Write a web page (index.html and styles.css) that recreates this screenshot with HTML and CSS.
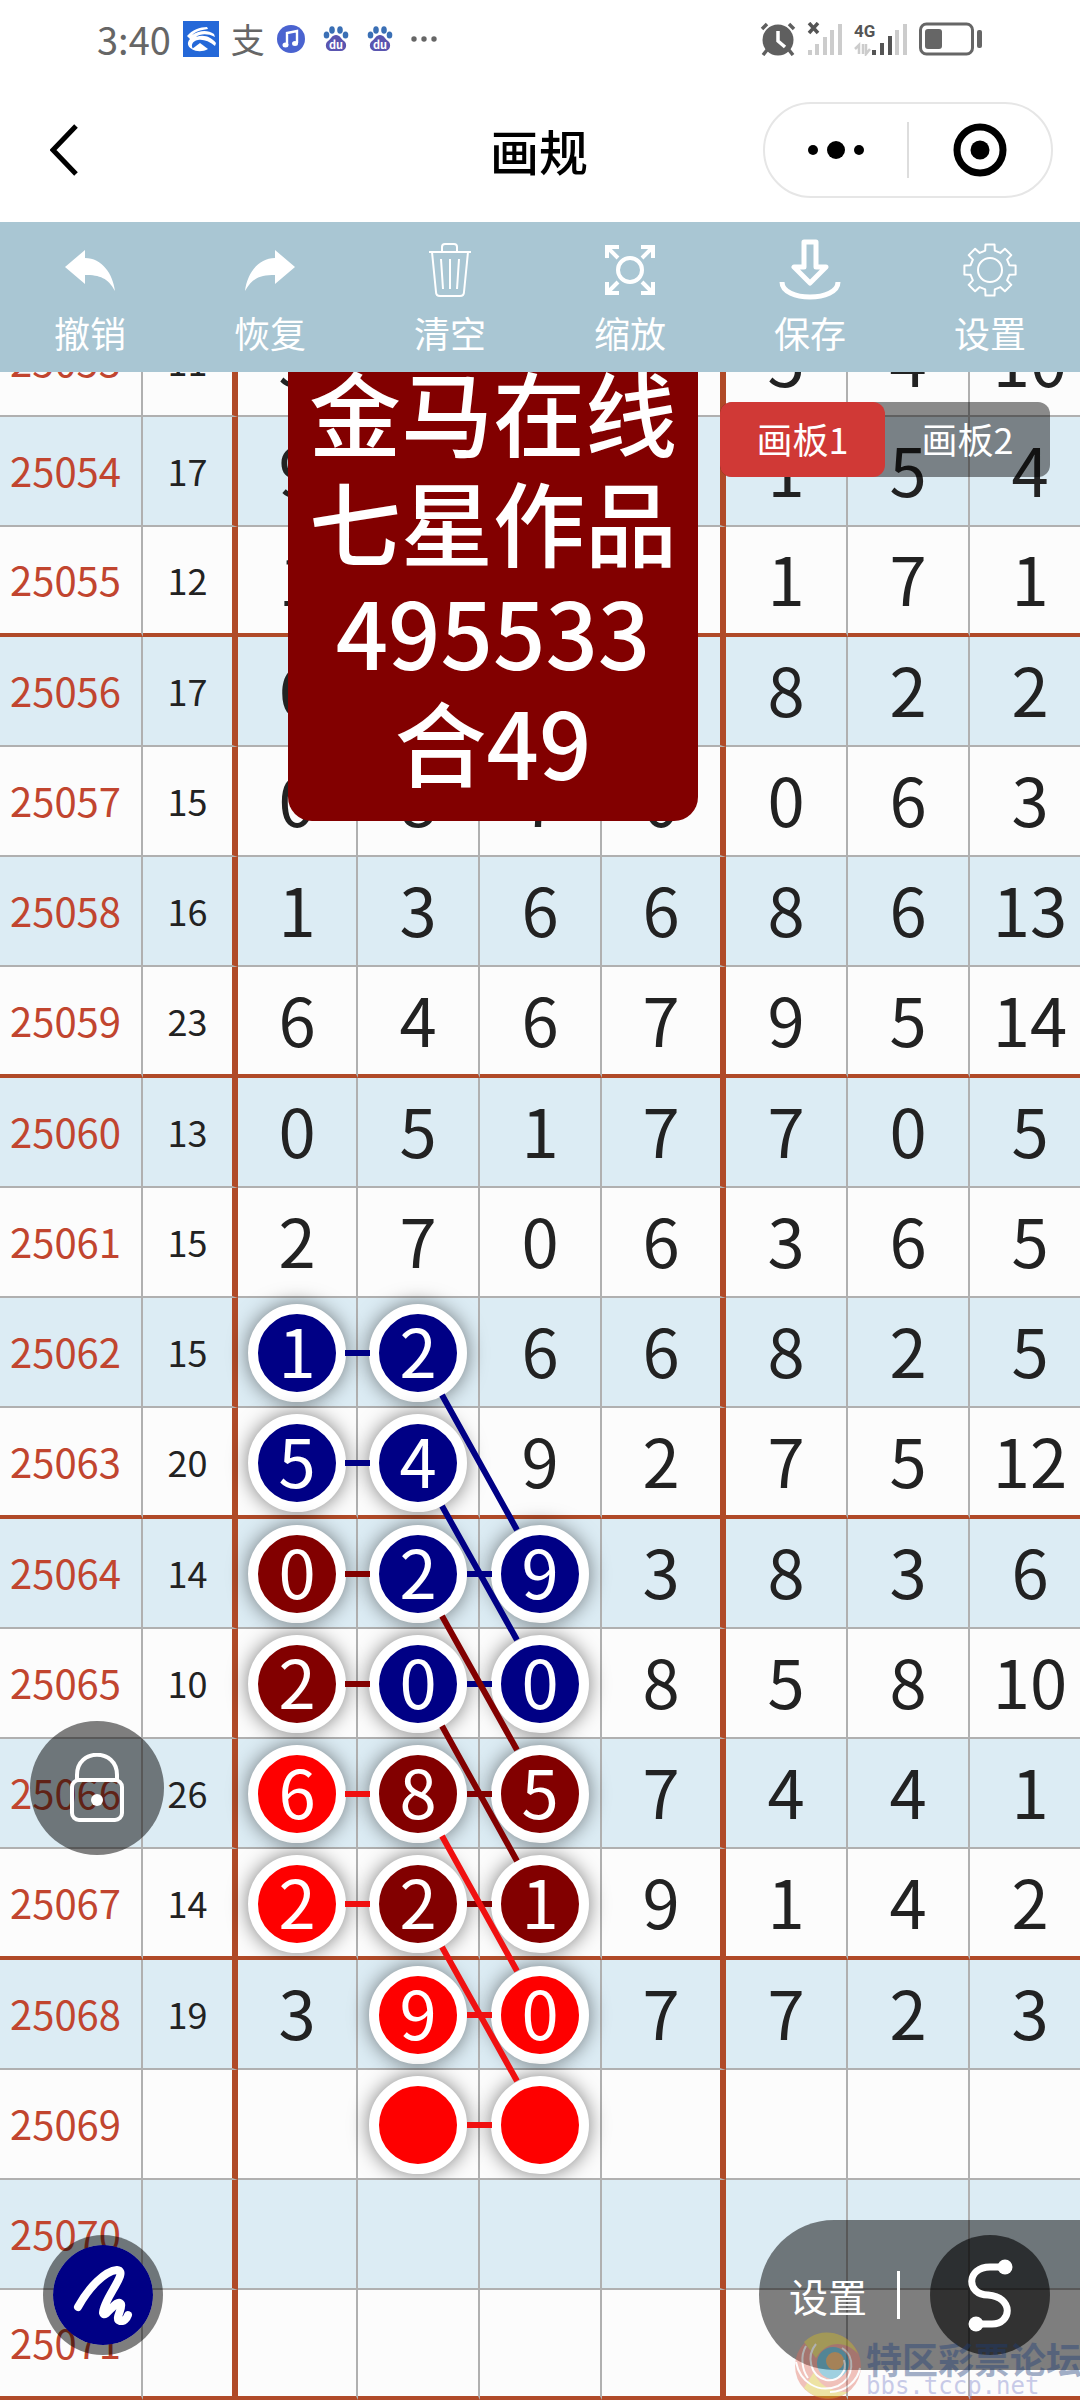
FILE: index.html
```html
<!DOCTYPE html>
<html lang="zh-CN">
<head>
  <meta charset="UTF-8" />
  <meta name="viewport" content="width=device-width, initial-scale=1.0" />
  <title>画规</title>
  <link rel="stylesheet" href="styles.css">
</head>
<body>
  <div class="app">
    <header class="status-bar">
      <div class="status-left">
        <span class="time">3:40</span>
        <svg width="36" height="36" viewBox="0 0 36 36">
          <rect width="36" height="36" fill="#2468d8"/>
          <path d="M4 15C9 9 17 6 24 6L25 8C17 9 12 11 9 14C17 9 25 9 31 13L32 16C24 12 17 13 13 16C21 13 28 16 33 22L32 25C26 20 20 18 15 19C9 20 7 25 11 29C5 27 3 22 7 18Z" fill="#fff"/>
          <path d="M9 28L17 22L25 28C20 31 13 31 9 28Z" fill="#fff"/>
        </svg>
        <span class="pay">支</span>
        <svg width="28" height="28" viewBox="0 0 28 28">
          <circle cx="14" cy="14" r="14" fill="#4a63d0"/>
          <path d="M10 20V8L20 6V18" fill="none" stroke="#fff" stroke-width="2.4"/>
          <ellipse cx="8.500" cy="20" rx="3" ry="2.500" fill="#fff"/>
          <ellipse cx="18" cy="18.500" rx="3" ry="2.500" fill="#fff"/>
        </svg>
        <svg class="paw" width="26" height="26" viewBox="0 0 26 26">
          <ellipse cx="3.500" cy="9" rx="2.800" ry="3.500"/><ellipse cx="9" cy="4" rx="2.800" ry="3.800"/>
          <ellipse cx="17" cy="4" rx="2.800" ry="3.800"/><ellipse cx="22.500" cy="9" rx="2.800" ry="3.500"/>
          <path d="M13 9C17 9 18 13 21 15C25 18 23 25 18 25H8C3 25 1 18 5 15C8 13 9 9 13 9Z" fill="#5a55b0"/>
          <text x="13" y="23">du</text>
        </svg>
        <svg class="paw" width="26" height="26" viewBox="0 0 26 26">
          <ellipse cx="3.500" cy="9" rx="2.800" ry="3.500"/><ellipse cx="9" cy="4" rx="2.800" ry="3.800"/>
          <ellipse cx="17" cy="4" rx="2.800" ry="3.800"/><ellipse cx="22.500" cy="9" rx="2.800" ry="3.500"/>
          <path d="M13 9C17 9 18 13 21 15C25 18 23 25 18 25H8C3 25 1 18 5 15C8 13 9 9 13 9Z" fill="#5a55b0"/>
          <text x="13" y="23">du</text>
        </svg>
        <svg class="more" width="26" height="6" viewBox="0 0 26 6" fill="#666">
          <circle cx="3" cy="3" r="2.700"/><circle cx="13" cy="3" r="2.700"/><circle cx="23" cy="3" r="2.700"/>
        </svg>
      </div>
      <div class="status-right">
        <svg width="36" height="34" viewBox="0 0 36 34">
          <circle cx="18" cy="18" r="15.500" fill="#5f5f5f"/>
          <path d="M2 7L7 2M34 7L29 2M7 28L3 33M29 28L33 33" stroke="#5f5f5f" stroke-width="3.500"/>
          <path d="M18 9V19L25 25" fill="none" stroke="#fff" stroke-width="3.500"/>
        </svg>
        <svg width="36" height="34" viewBox="0 0 36 34">
          <path d="M2 1L11 11M11 1L2 11" stroke="#555" stroke-width="3.500"/>
          <path d="M3 28V33M10 22V33M18 15V33M25 8V33M33 2V33" stroke="#ccc" stroke-width="4"/>
        </svg>
        <svg width="54" height="34" viewBox="0 0 54 34">
          <text x="0" y="15" class="net">4G</text>
          <path d="M1 27L5 23V32M9 22V32M12 22V32L16 27" fill="none" stroke="#ccc" stroke-width="2.500"/>
          <path d="M20 28V33M28 21V33M36 14V33" stroke="#555" stroke-width="4"/>
          <path d="M43 8V33M51 2V33" stroke="#ccc" stroke-width="4"/>
        </svg>
        <svg width="64" height="34" viewBox="0 0 64 34">
          <rect x="1.500" y="2" width="52" height="30" rx="6" fill="none" stroke="#666" stroke-width="3"/>
          <rect x="6" y="7" width="17" height="20" rx="3" fill="#666"/>
          <rect x="58" y="8" width="5" height="18" rx="2" fill="#666"/>
        </svg>
      </div>
    </header>

    <nav class="nav-bar">
      <button class="back" aria-label="返回">
        <svg width="30" height="54" viewBox="0 0 30 54"><path d="M26 3L3 27L26 51" fill="none" stroke="#000" stroke-width="5"/></svg>
      </button>
      <h1>画规</h1>
      <div class="capsule">
        <button aria-label="更多">
          <svg width="58" height="20" viewBox="0 0 58 20"><circle cx="6" cy="10" r="5"/><circle cx="29" cy="10" r="9"/><circle cx="52" cy="10" r="5"/></svg>
        </button>
        <span class="divider"></span>
        <button aria-label="关闭">
          <svg width="54" height="54" viewBox="0 0 54 54"><circle cx="27" cy="27" r="23" fill="none" stroke="#000" stroke-width="7"/><circle cx="27" cy="27" r="9.500"/></svg>
        </button>
      </div>
    </nav>

    <div class="toolbar">
      <button>
        <svg viewBox="0 0 60 60"><path class="solid" d="M5 27L25 10V18C42 18 53 34 55 51C48 38 40 35 25 35V44Z"/></svg>
        <span>撤销</span>
      </button>
      <button>
        <svg viewBox="0 0 60 60"><path class="solid" d="M55 27L35 10V18C18 18 7 34 5 51C12 38 20 35 35 35V44Z"/></svg>
        <span>恢复</span>
      </button>
      <button>
        <svg viewBox="0 0 60 60"><path d="M9 12H51M22 12V7Q22 4 25 4H34Q37 4 37 7V12M12 12L16 52Q16 56 20 56H40Q44 56 44 52L48 12M21 19L23 49M30 19V49M39 19L37 49"/></svg>
        <span>清空</span>
      </button>
      <button>
        <svg class="bold" viewBox="0 0 60 60"><circle cx="30" cy="30" r="12"/><path d="M7 18V7H19M7 7L18 18M41 7H53V18M53 7L42 18M7 42V53H19M7 53L18 42M41 53H53V42M53 53L42 42"/></svg>
        <span>缩放</span>
      </button>
      <button>
        <svg class="bolder" viewBox="0 0 60 60"><path stroke-linejoin="round" d="M24 2H36V27H46L30 43L14 27H24ZM2 42C2 62 58 62 58 42"/></svg>
        <span>保存</span>
      </button>
      <button>
        <svg viewBox="0 0 60 60"><circle cx="30" cy="30" r="12"/><path stroke-linejoin="round" d="M49.4 25.2L55.6 25.5V34.5L49.4 34.8L47.1 40.3L51.3 44.9L44.9 51.3L40.3 47.1L34.8 49.4L34.5 55.6H25.5L25.2 49.4L19.7 47.1L15.1 51.3L8.7 44.9L12.9 40.3L10.6 34.8L4.4 34.5V25.5L10.6 25.2L12.9 19.7L8.7 15.1L15.1 8.7L19.7 12.9L25.2 10.6L25.5 4.4H34.5L34.8 10.6L40.3 12.9L44.9 8.7L51.3 15.1L47.1 19.7Z"/></svg>
        <span>设置</span>
      </button>
    </div>

    <main class="board">
      <table class="chart">
        <colgroup>
          <col class="c-issue"><col class="c-sum"><col class="c-first"><col><col><col class="c-fourth"><col><col><col>
        </colgroup>
        <tbody>
          <tr><th>25053</th><td>11</td><td>5</td><td></td><td></td><td></td><td>5</td><td>4</td><td>10</td></tr>
          <tr><th>25054</th><td>17</td><td>9</td><td></td><td></td><td></td><td>1</td><td>5</td><td>4</td></tr>
          <tr class="thick"><th>25055</th><td>12</td><td>1</td><td></td><td></td><td></td><td>1</td><td>7</td><td>1</td></tr>
          <tr><th>25056</th><td>17</td><td>6</td><td></td><td></td><td></td><td>8</td><td>2</td><td>2</td></tr>
          <tr><th>25057</th><td>15</td><td>0</td><td>8</td><td>7</td><td>0</td><td>0</td><td>6</td><td>3</td></tr>
          <tr><th>25058</th><td>16</td><td>1</td><td>3</td><td>6</td><td>6</td><td>8</td><td>6</td><td>13</td></tr>
          <tr class="thick tall"><th>25059</th><td>23</td><td>6</td><td>4</td><td>6</td><td>7</td><td>9</td><td>5</td><td>14</td></tr>
          <tr><th>25060</th><td>13</td><td>0</td><td>5</td><td>1</td><td>7</td><td>7</td><td>0</td><td>5</td></tr>
          <tr><th>25061</th><td>15</td><td>2</td><td>7</td><td>0</td><td>6</td><td>3</td><td>6</td><td>5</td></tr>
          <tr><th>25062</th><td>15</td><td><span class="ball navy">1</span></td><td><span class="ball navy">2</span></td><td>6</td><td>6</td><td>8</td><td>2</td><td>5</td></tr>
          <tr class="thick tall"><th>25063</th><td>20</td><td><span class="ball navy">5</span></td><td><span class="ball navy">4</span></td><td>9</td><td>2</td><td>7</td><td>5</td><td>12</td></tr>
          <tr><th>25064</th><td>14</td><td><span class="ball maroon">0</span></td><td><span class="ball navy">2</span></td><td><span class="ball navy">9</span></td><td>3</td><td>8</td><td>3</td><td>6</td></tr>
          <tr><th>25065</th><td>10</td><td><span class="ball maroon">2</span></td><td><span class="ball navy">0</span></td><td><span class="ball navy">0</span></td><td>8</td><td>5</td><td>8</td><td>10</td></tr>
          <tr><th>25066</th><td>26</td><td><span class="ball red">6</span></td><td><span class="ball maroon">8</span></td><td><span class="ball maroon">5</span></td><td>7</td><td>4</td><td>4</td><td>1</td></tr>
          <tr class="thick tall"><th>25067</th><td>14</td><td><span class="ball red">2</span></td><td><span class="ball maroon">2</span></td><td><span class="ball maroon">1</span></td><td>9</td><td>1</td><td>4</td><td>2</td></tr>
          <tr><th>25068</th><td>19</td><td>3</td><td><span class="ball red">9</span></td><td><span class="ball red">0</span></td><td>7</td><td>7</td><td>2</td><td>3</td></tr>
          <tr><th>25069</th><td></td><td></td><td><span class="ball red"></span></td><td><span class="ball red"></span></td><td></td><td></td><td></td><td></td></tr>
          <tr><th>25070</th><td></td><td></td><td></td><td></td><td></td><td></td><td></td><td></td></tr>
          <tr class="thick"><th>25071</th><td></td><td></td><td></td><td></td><td></td><td></td><td></td><td></td></tr>
        </tbody>
      </table>

      <!-- links between the balls, same origin as the table -->
      <svg class="links" width="1092" height="2094" viewBox="0 0 1092 2094">
        <g stroke="#000085">
          <path d="M345 1046H370M345 1156H370M467 1267H492M467 1377H492"/>
          <path d="M442 1088L517 1223M442 1199L517 1333"/>
        </g>
        <g stroke="#820000">
          <path d="M345 1267H370M345 1377H370M467 1487H492M467 1597H492"/>
          <path d="M442 1309L517 1443M442 1419L517 1554"/>
        </g>
        <g stroke="#f01010">
          <path d="M345 1487H370M345 1597H370M467 1708H492M467 1818H492"/>
          <path d="M442 1529L517 1664M442 1640L517 1774"/>
        </g>
      </svg>

      <div class="note">金马在线<br>七星作品<br>495533<br>合49</div>

      <div class="tabs">
        <button class="active">画板1</button>
        <button>画板2</button>
      </div>

      <button class="lock" aria-label="锁定">
        <svg width="56" height="70" viewBox="0 0 56 70"><path d="M8 27V22C8 -5 48 -5 48 22V27"/><rect x="3" y="27" width="50" height="40" rx="7"/><circle class="dot" cx="28" cy="47" r="6"/></svg>
      </button>

      <button class="pen" aria-label="画笔">
        <svg width="60" height="60" viewBox="0 0 60 60"><path d="M5 42C16 22 32 6 44 5C57 6 30 34 30 48C32 55 44 32 48 39C50 44 41 54 47 56C51 57 54 53 55 50"/></svg>
      </button>

      <div class="line-panel">
        <button class="setup">设置</button>
        <span class="bar"></span>
        <button class="curve" aria-label="曲线">
          <svg width="48" height="76" viewBox="0 0 48 76"><path d="M38 10H24C0 10 0 38 22 38C48 40 46 67 26 67H10"/><circle cx="39" cy="10" r="7.500"/><circle cx="10" cy="67" r="7.500"/></svg>
        </button>
      </div>

      <div class="watermark">
        <svg width="68" height="68" viewBox="0 0 68 68">
          <circle cx="34" cy="34" r="33" fill="#e06a5a"/>
          <path d="M10 10A33 33 0 0 1 64 22C54 10 34 6 22 26Z" fill="#d8c020"/>
          <path d="M10 56A33 33 0 0 0 54 60C40 60 26 56 20 40Z" fill="#d8c020"/>
          <circle cx="39" cy="31" r="16" fill="#1590b8"/>
          <circle cx="41" cy="29" r="9" fill="#e08a20"/>
          <path d="M2 30C6 50 24 62 44 54C60 46 62 24 48 16M22 12C12 24 16 44 32 48C44 50 54 40 50 28M36 60C52 60 64 48 66 36M12 14C6 24 8 38 14 46" fill="none" stroke="#fff" stroke-width="2"/>
        </svg>
        <p><b>特区彩票论坛</b><span>bbs.tccp.net</span></p>
      </div>
    </main>
  </div>
</body>
</html>
```
FILE: styles.css
```css
* {
  box-sizing: border-box;
}

body {
  margin: 0;
  background: #fff;
  color: #222;
  font-family: "Noto Sans CJK SC", sans-serif;
}

button {
  margin: 0;
  padding: 0;
  border: none;
  background: none;
  color: inherit;
  font-family: inherit;
  cursor: pointer;
}

svg {
  display: block;
}

.app {
  height: 100vh;
  display: flex;
  flex-direction: column;
  overflow: hidden;
}

/* Status bar */
.status-bar {
  height: 78px;
  padding: 0 97px;
  display: flex;
  justify-content: space-between;
  align-items: center;
  color: #666;
}

.status-left,
.status-right {
  display: flex;
  align-items: center;
}

.status-left {
  gap: 12px;
}

.status-right {
  gap: 11px;
}

.time {
  font-size: 38px;
  line-height: 56px;
}

.pay {
  font-size: 34px;
  line-height: 56px;
}

.paw {
  fill: #3a6fb5;
  margin-left: 6px;
}

.more {
  margin-left: 6px;
}

.paw text {
  fill: #fff;
  font-size: 11px;
  font-weight: bold;
  text-anchor: middle;
}

.net {
  fill: #555;
  font-family: Roboto, sans-serif;
  font-size: 17px;
  font-weight: bold;
}

/* Title */
.nav-bar {
  height: 144px;
  padding: 0 27px 0 50px;
  display: grid;
  grid-template-columns: 1fr auto 1fr;
  align-items: center;
}

.back {
  justify-self: start;
}

.nav-bar h1 {
  margin: 0;
  padding-right: 25px;
  color: #000;
  font-size: 49px;
  font-weight: 500;
  line-height: 70px;
}

.capsule {
  justify-self: end;
  width: 290px;
  height: 96px;
  border: 2px solid #e6e6e6;
  border-radius: 48px;
  display: flex;
  align-items: center;
}

.capsule button {
  width: 142px;
  display: flex;
  justify-content: center;
}

.divider {
  width: 2px;
  height: 56px;
  background: #ddd;
}

/* Toolbar */
.toolbar {
  height: 150px;
  padding-top: 18px;
  display: flex;
  background: #a9c6d3;
  color: #fff;
}

.toolbar button {
  flex: 1;
  display: flex;
  flex-direction: column;
  align-items: center;
  gap: 10px;
  font-size: 36px;
  line-height: 44px;
}

.toolbar svg {
  width: 60px;
  height: 60px;
  fill: none;
  stroke: #fff;
  stroke-width: 2px;
}

.toolbar .bold {
  stroke-width: 4px;
}

.toolbar .bolder {
  overflow: visible;
  stroke-width: 5px;
}

.toolbar .solid {
  fill: #fff;
  stroke: none;
}

/* Board */
.board {
  flex: 1;
  position: relative;
  overflow: hidden;
  background: #fcfcfc;
}

.chart {
  width: 1092px;
  margin-top: -65px;
  table-layout: fixed;
  border-collapse: separate;
  border-spacing: 0;
}

.c-issue {
  width: 143px;
}

.c-sum {
  width: 95px;
}

.c-first {
  width: 120px;
}

.c-fourth {
  width: 124px;
}

.chart td,
.chart th {
  height: 110px;
  padding: 0 0 6px;
  border-right: 2px solid #b0b0b0;
  border-bottom: 2px solid #b0b0b0;
  text-align: center;
  vertical-align: middle;
  font-size: 67px;
  font-weight: normal;
  line-height: 92px;
}

.chart th {
  padding-right: 10px;
  padding-bottom: 2px;
  color: #c1452f;
  font-size: 40px;
}

.chart td:nth-child(2) {
  padding-bottom: 2px;
  font-size: 36px;
}

.chart td:nth-child(2),
.chart td:nth-child(6) {
  border-right: 6px solid #b04a28;
}

.chart tr:nth-child(even) {
  background: #dcecf4;
}

.chart tr:nth-child(odd) {
  background: #fcfcfc;
}

.chart .thick td,
.chart .thick th {
  border-bottom: 4px solid #b04a28;
}

.chart .tall td,
.chart .tall th {
  height: 111px;
}

.chart td:has(.ball) {
  padding: 2px 0 0;
}

.ball {
  display: block;
  width: 98px;
  height: 98px;
  margin: 0 auto;
  border: 10px solid #fff;
  border-radius: 50%;
  box-shadow: 0 0 20px rgba(0, 0, 0, 0.5);
  color: #fff;
  line-height: 70px;
}

.navy {
  background: #000085;
}

.maroon {
  background: #820000;
}

.red {
  background: #fe0000;
}

.links {
  position: absolute;
  top: -65px;
  left: 0;
  fill: none;
  stroke-width: 6px;
}

/* Floating text note, its top is under the toolbar */
.note {
  position: absolute;
  top: -38px;
  left: 288px;
  width: 410px;
  padding: 21px 0 26px;
  border-radius: 24px;
  background: #820000;
  color: #fff;
  font-size: 92px;
  font-weight: 500;
  line-height: 110px;
  text-align: center;
}

.tabs {
  position: absolute;
  top: 30px;
  right: 30px;
  display: flex;
  border-radius: 12px;
  background: rgba(0, 0, 0, 0.45);
}

.tabs button {
  width: 165px;
  height: 75px;
  padding-bottom: 4px;
  border-radius: 12px;
  color: #fff;
  font-size: 36px;
}

.tabs .active {
  background: #d03936;
}

.lock {
  position: absolute;
  top: 1349px;
  left: 30px;
  width: 134px;
  height: 134px;
  border-radius: 50%;
  background: rgba(0, 0, 0, 0.5);
}

.lock svg {
  margin: 0 auto;
  fill: none;
  stroke: #fff;
  stroke-width: 4px;
}

.lock .dot {
  fill: #fff;
  stroke: none;
}

.pen {
  position: absolute;
  bottom: 45px;
  left: 43px;
  width: 120px;
  height: 120px;
  border: 10px solid rgba(0, 0, 0, 0.5);
  border-radius: 50%;
  background: #000085;
  background-clip: padding-box;
}

.pen svg {
  margin: 0 auto;
  fill: none;
  stroke: #fff;
  stroke-width: 8px;
  stroke-linecap: round;
  stroke-linejoin: round;
}

.line-panel {
  position: absolute;
  right: 0;
  bottom: 30px;
  height: 150px;
  padding: 0 30px;
  display: flex;
  align-items: center;
  gap: 30px;
  border-radius: 75px 0 0 75px;
  background: rgba(0, 0, 0, 0.5);
  color: #fff;
}

.setup {
  font-size: 39px;
}

.bar {
  width: 3px;
  height: 48px;
  background: #fff;
}

.curve {
  width: 120px;
  height: 120px;
  border-radius: 50%;
  background: rgba(0, 0, 0, 0.6);
}

.curve svg {
  margin: 0 auto;
  fill: #fff;
}

.curve path {
  fill: none;
  stroke: #fff;
  stroke-width: 7px;
}

.watermark {
  position: absolute;
  left: 794px;
  bottom: 0;
  display: flex;
  gap: 4px;
  color: #1c3c78;
  opacity: 0.4;
  pointer-events: none;
}

.watermark p {
  margin: 0;
  padding-top: 8px;
  white-space: nowrap;
}

.watermark b,
.watermark span {
  display: block;
}

.watermark b {
  font-size: 36px;
  line-height: 36px;
}

.watermark span {
  color: #7a80c8;
  font-family: "DejaVu Sans Mono", monospace;
  font-size: 24px;
  line-height: 20px;
}
```
